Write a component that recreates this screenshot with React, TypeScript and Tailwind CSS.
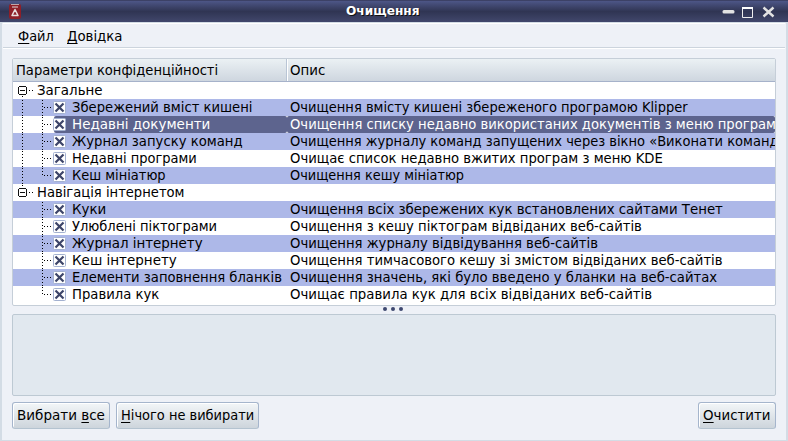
import React, { useLayoutEffect, useRef, useState } from "react";

/** Single-line label stretched horizontally to fill a given width. */
function Label({ w, children }: { w: number; children: React.ReactNode }) {
  const ref = useRef<HTMLSpanElement>(null);
  const [scale, setScale] = useState(1);
  useLayoutEffect(() => {
    if (ref.current) setScale(w / ref.current.offsetWidth);
  }, [w]);
  return (
    <span className="block shrink-0" style={{ width: w }}>
      <span ref={ref} className="inline-block origin-left whitespace-pre" style={{ transform: `scaleX(${scale})` }}>
        {children}
      </span>
    </span>
  );
}

function Key({ children }: { children: string }) {
  return <span className="border-b border-black inline-block h-[15px] leading-[15px]">{children}</span>;
}

type Row = { name: string; nw: number; desc?: string; dw?: number; selected?: boolean; last?: boolean };

const rows: Row[] = [
  { name: "Загальне", nw: 66 },
  { name: "Збережений вміст кишені", nw: 181, desc: "Очищення вмісту кишені збереженого програмою Klipper", dw: 398 },
  { name: "Недавні документи", nw: 138, desc: "Очищення списку недавно використаних документів з меню програм", dw: 486, selected: true },
  { name: "Журнал запуску команд", nw: 171, desc: "Очищення журналу команд запущених через вікно «Виконати команд", dw: 488 },
  { name: "Недавні програми", nw: 125, desc: "Очищає список недавно вжитих програм з меню KDE", dw: 373 },
  { name: "Кеш мініатюр", nw: 94, desc: "Очищення кешу мініатюр", dw: 174, last: true },
  { name: "Навігація інтернетом", nw: 147 },
  { name: "Куки", nw: 34, desc: "Очищення всіх збережених кук встановлених сайтами Тенет", dw: 433 },
  { name: "Улюблені піктограми", nw: 145, desc: "Очищення з кешу піктограм відвіданих веб-сайтів", dw: 352 },
  { name: "Журнал інтернету", nw: 131, desc: "Очищення журналу відвідування веб-сайтів", dw: 308 },
  { name: "Кеш інтернету", nw: 105, desc: "Очищення тимчасового кешу зі змістом відвіданих веб-сайтів", dw: 433 },
  { name: "Елементи заповнення бланків", nw: 210, desc: "Очищення значень, які було введено у бланки на веб-сайтах", dw: 427 },
  { name: "Правила кук", nw: 87, desc: "Очищає правила кук для всіх відвіданих веб-сайтів", dw: 362, last: true },
];

function Branch({ row, index }: { row: Row; index: number }) {
  const stroke = { stroke: "#000", strokeWidth: 1, strokeDasharray: "1 2", fill: "none" };
  if (!row.desc) {
    return (
      <svg width="24" height="17" className="shrink-0" shapeRendering="crispEdges">
        {index > 0 && <path d="M9.5 1V4" {...stroke} />}
        {index === 0 && <path d="M9.5 14V17" {...stroke} />}
        <path d="M6 4.5H13M6 12.5H13M5.5 5V12M13.5 5V12M7 8.5H12" stroke="#111" fill="none" />
        <path d="M16 8.5H21" {...stroke} />
      </svg>
    );
  }
  return (
    <svg width="59" height="17" className="shrink-0">
      <g shapeRendering="crispEdges">
        {index < 6 && <path d="M9.5 1V17" {...stroke} />}
        <path d={row.last ? "M29.5 1V9" : "M29.5 1V17"} {...stroke} />
        <path d="M31 8.500H40" {...stroke} />
      </g>
      {row.selected && <path d="M41 2q0-2 2-2h16v17H43q-2 0-2-2z" fill="#5d648e" />}
      <rect x="40.5" y="2.5" width="12" height="12" rx="1" fill="#fff" stroke="#a3b1d0" />
      <path d="M42.500 4.500L50.500 12.500M50.500 4.500L42.500 12.500" stroke="#3c4468" strokeWidth="2.200" />
    </svg>
  );
}

function TreeRow({ row, index }: { row: Row; index: number }) {
  const sel = row.selected;
  return (
    <div className={`flex h-[17px] leading-[17px] ${index % 2 ? "bg-[#adb8e8]" : "bg-white"} ${sel ? "text-white" : "text-black"}`}>
      <div className="flex w-[274px] shrink-0">
        <Branch row={row} index={index} />
        <div className={`flex grow ${sel ? "rounded-r-[2px] bg-[#5d648e]" : ""}`}>
          <Label w={row.nw}>{row.name}</Label>
        </div>
      </div>
      <div className={`flex min-w-0 grow overflow-hidden pl-[3px] ${sel ? "rounded-[2px] bg-[#5d648e]" : ""}`}>
        {row.desc && <Label w={row.dw!}>{row.desc}</Label>}
      </div>
    </div>
  );
}

function Button({ children, className }: { children: React.ReactNode; className: string }) {
  return (
    <button className={`flex h-[27px] items-center rounded-[3px] border border-[#a5b5cc] border-b-[#b4c3d0] bg-linear-to-b from-[#f3f6f8] to-[#cdd5dc] pl-1 text-left shadow-[inset_1px_1px_0_#fff] ${className}`}>
      {children}
    </button>
  );
}

export default function App() {
  return (
    <div className="flex h-[441px] w-[788px] flex-col overflow-hidden bg-[#eef1f7] font-['DejaVu_Sans_Condensed','DejaVu_Sans',sans-serif] text-[14px] text-black">
      <header className="flex h-[22px] shrink-0 items-center bg-linear-to-b from-[#4d5687] via-[#303553] to-[#41476c] border-t border-[#3c4166]">
        <svg width="28" height="21" className="shrink-0">
          <rect x="9" y="3" width="12" height="15" rx="2" fill="#8e1f28" />
          <path d="M11 3.5H19" stroke="#c0a5a8" />
          <path d="M12 6H18" stroke="#ddd" />
          <path d="M15 8.500L18 14.500H12Z" stroke="#e9dede" strokeWidth="1.500" strokeLinejoin="round" fill="none" />
        </svg>
        <div className="flex grow pl-[318px] font-['DejaVu_Sans',sans-serif] text-[12px] font-bold leading-[21px] text-white [text-shadow:1px_1px_0_#111]">
          <Label w={74}>Очищення</Label>
        </div>
        <svg width="68" height="21" className="shrink-0">
          <rect x="2.5" y="9" width="12" height="3.500" rx="1.500" fill="#e2e2e2" />
          <path d="M22.500 7V16.500H32.500V7" stroke="#eee" fill="none" />
          <path d="M22 7H33" stroke="#fff" strokeWidth="2" />
          <path d="M43.500 6.500L53.500 15.500M53.500 6.500L43.500 15.500" stroke="#e2e2e2" strokeWidth="2.400" />
        </svg>
      </header>
      <div className="flex min-h-0 grow flex-col border-x-2 border-b border-t border-[#d3dce5]">
        <nav className="ml-px mr-px flex h-[25px] shrink-0 items-center gap-[13px] border-b border-t border-t-white border-b-[#ccd4dd] pl-[15px] pt-[2px] leading-[17px]">
          <Label w={36}><Key>Ф</Key>айл</Label>
          <Label w={56}><Key>Д</Key>овідка</Label>
        </nav>
        <main className="ml-px mr-px flex grow flex-col border-t border-white px-[9px] pt-[9px]">
          <section className="flex h-[248px] shrink-0 flex-col overflow-hidden rounded-[2px] border border-[#c5ced8] bg-white">
            <div className="flex h-[23px] shrink-0 border-b border-[#a6b2ca] bg-linear-to-b from-[#ebf1f4] to-[#ced6df] leading-[23px]">
              <div className="flex w-[274px] shrink-0 border-r border-[#b9c5d5] pl-[3px]">
                <Label w={202}>Параметри конфіденційності</Label>
              </div>
              <div className="flex grow border-l border-white pl-[2px]">
                <Label w={35}>Опис</Label>
              </div>
            </div>
            {rows.map((r, i) => <TreeRow key={r.name} row={r} index={i} />)}
          </section>
          <div className="flex h-[8px] shrink-0 items-center justify-center gap-1 pr-[3px] pb-[2px]">
            {[0, 1, 2].map((i) => <i key={i} className="size-[4px] rounded-full bg-[#3e4870]" />)}
          </div>
          <section className="h-[82px] shrink-0 rounded-[2px] border border-[#bdc9d3] bg-[#e1e8ef]" />
          <footer className="mt-[6px] flex shrink-0 gap-[6px] leading-[17px]">
            <Button className="w-[98px]"><Label w={88}>Вибрати <Key>в</Key>се</Label></Button>
            <Button className="w-[143px]"><Label w={133}><Key>Н</Key>ічого не вибирати</Label></Button>
            <Button className="ml-auto w-[78px]"><Label w={68}><Key>О</Key>чистити</Label></Button>
          </footer>
        </main>
      </div>
    </div>
  );
}
